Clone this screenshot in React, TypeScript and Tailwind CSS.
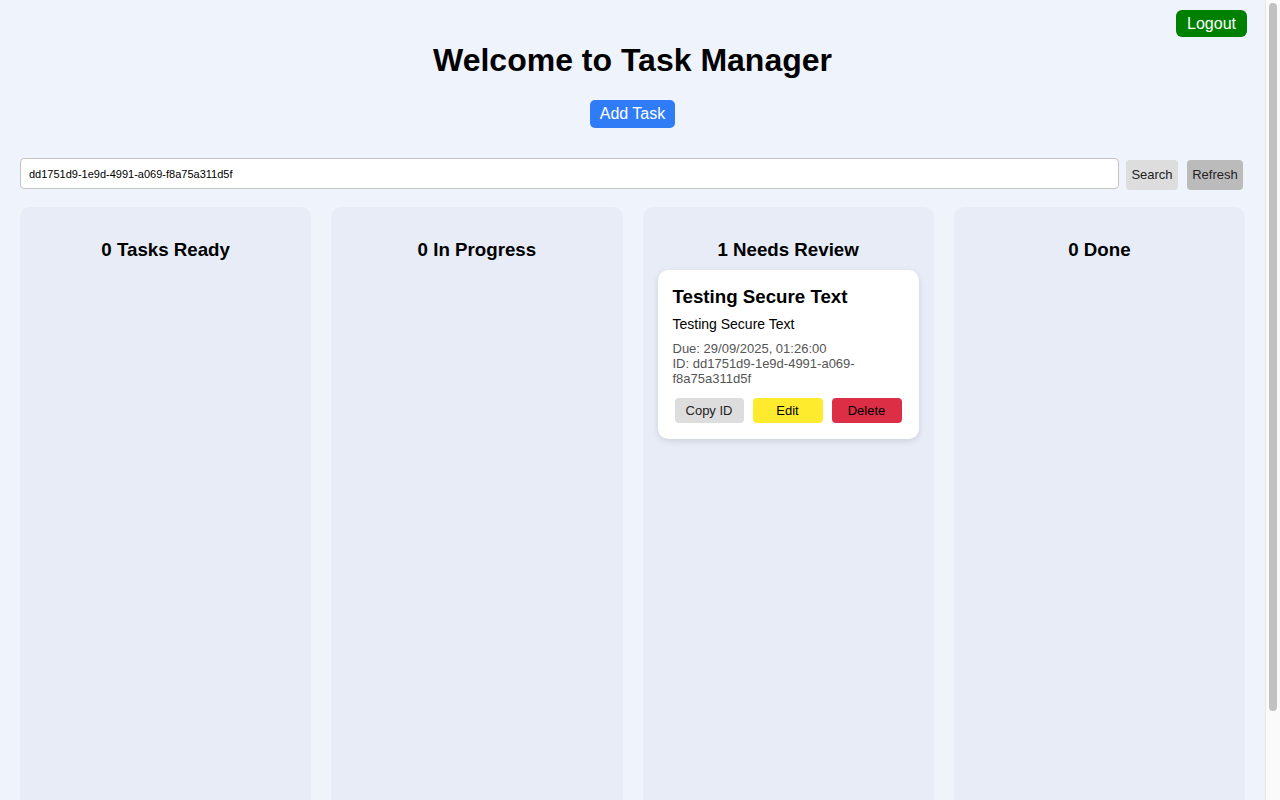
import { useState } from 'react';

type Task = {
  id: string;
  title: string;
  description: string;
  due: string;
  status: 'ready' | 'progress' | 'review' | 'done';
};

const tasks: Task[] = [
  {
    id: 'dd1751d9-1e9d-4991-a069-f8a75a311d5f',
    title: 'Testing Secure Text',
    description: 'Testing Secure Text',
    due: '29/09/2025, 01:26:00',
    status: 'review',
  },
];

const columns: { key: Task['status']; label: string }[] = [
  { key: 'ready', label: 'Tasks Ready' },
  { key: 'progress', label: 'In Progress' },
  { key: 'review', label: 'Needs Review' },
  { key: 'done', label: 'Done' },
];

function TaskCard({ task }: { task: Task }) {
  return (
    <div className="bg-white rounded-[10px] shadow-[0_2px_6px_rgba(0,0,0,0.12)] px-[15px] pt-[15px] pb-[16px]">
      <h4 className="text-[18.72px] font-bold leading-[24px] text-black">{task.title}</h4>
      <p className="text-[14px] leading-[17px] mt-[7px] text-black">{task.description}</p>
      <div className="mt-[8px] text-[13px] leading-[15px] text-[#555]">
        <div>Due: {task.due}</div>
        <div className="break-words">ID: {task.id}</div>
      </div>
      <div className="flex gap-[9px] mt-[12px] ml-[2px]">
        <button className="w-[69px] h-[25px] rounded-[4px] bg-[#dddddd] text-[13px] text-[#222]">Copy ID</button>
        <button className="w-[70px] h-[25px] rounded-[4px] bg-[#ffeb2e] text-[13px] text-black">Edit</button>
        <button className="w-[70px] h-[25px] rounded-[4px] bg-[#dc2f45] text-[13px] text-black">Delete</button>
      </div>
    </div>
  );
}

export default function App() {
  const [query, setQuery] = useState('dd1751d9-1e9d-4991-a069-f8a75a311d5f');

  return (
    <div className="flex h-screen overflow-hidden bg-[#eff4fc] font-['Liberation_Sans',Arial,sans-serif] text-black">
      <main className="relative flex-1 px-5 pb-5">
        <button className="absolute top-[10px] right-[18px] h-[27px] px-[11px] rounded-[6px] bg-[#008000] text-white text-[16px]">
          Logout
        </button>

        <div className="flex flex-col items-center pt-[42px]">
          <h1 className="text-[32px] font-bold leading-[37px]">Welcome to Task Manager</h1>
          <button className="mt-[21px] h-[28px] px-[10px] rounded-[5px] bg-[#2f7cf6] text-white text-[16px]">
            Add Task
          </button>
        </div>

        <div className="flex items-start mt-[30px]">
          <input
            value={query}
            onChange={(e) => setQuery(e.target.value)}
            className="flex-1 h-[31px] rounded-[4px] border border-[#c4c4c4] bg-white px-2 text-[11px] text-black outline-none"
          />
          <button className="ml-[7px] mt-[2px] h-[30px] w-[52px] rounded-[4px] bg-[#dddddd] text-[13px] text-[#222]">Search</button>
          <button className="ml-[9px] mr-[2px] mt-[2px] h-[30px] w-[56px] rounded-[4px] bg-[#bbbbbb] text-[13px] text-[#222]">Refresh</button>
        </div>

        <div className="grid grid-cols-4 gap-5 mt-[17px]">
          {columns.map((col) => {
            const list = tasks.filter((t) => t.status === col.key);
            return (
              <div key={col.key} className="bg-[#e7ecf7] rounded-[10px] px-[15px] pt-[31px] min-h-[680px]">
                <h3 className="text-center text-[18.72px] font-bold leading-[24px] mb-[8px]">
                  {list.length} {col.label}
                </h3>
                <div className="flex flex-col gap-3">
                  {list.map((t) => (
                    <TaskCard key={t.id} task={t} />
                  ))}
                </div>
              </div>
            );
          })}
        </div>
      </main>

      <aside className="w-[15px] shrink-0 bg-[#fafafa] border-l border-[#e8e8e8] pt-[3px] px-[3px]">
        <div className="h-[708px] rounded-full bg-[#c1c1c1]" />
      </aside>
    </div>
  );
}
